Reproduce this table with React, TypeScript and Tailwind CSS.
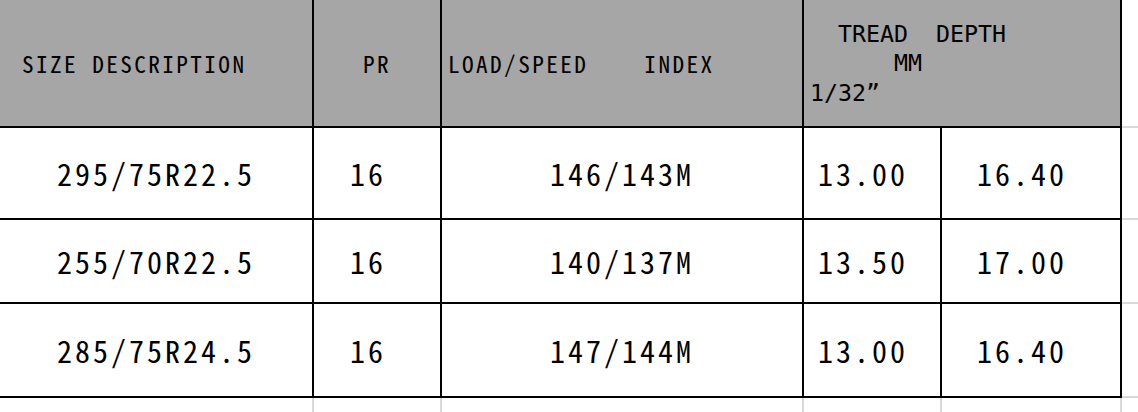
import React from "react";

const mono = { fontFamily: '"Noto Sans Mono CJK SC", "DejaVu Sans Mono", monospace' };
const dejavu = { fontFamily: '"DejaVu Sans Mono", "Liberation Mono", monospace' };

const rows = [
  { h: "h-[92px]", size: "295/75R22.5", pr: "16 ", li: "146/143M", mm: "13.00 ", in32: "16.40 " },
  { h: "h-[84px]", size: "255/70R22.5", pr: "16 ", li: "140/137M", mm: "13.50 ", in32: "17.00 " },
  { h: "h-[94px]", size: "285/75R24.5", pr: "16 ", li: "147/144M", mm: "13.00 ", in32: "16.40 " },
];

export default function App() {
  const cell = "flex items-center justify-center border-r-2 border-b-2 border-black text-[30px] tracking-[3px] leading-none text-black whitespace-pre";
  const head = "h-[128px] bg-[#a6a6a6] border-r-2 border-b-2 border-black text-[23.25px] text-black whitespace-pre";
  return (
    <div className="w-[1138px] h-[412px] bg-white overflow-hidden" style={mono}>
      <div className="grid grid-cols-[314px_128px_362px_138px_180px_16px]">
        {/* header */}
        <div className={`${head} tracking-[2.4px] flex items-center pl-[22px]`}>SIZE DESCRIPTION</div>
        <div className={`${head} tracking-[2.4px] flex items-center justify-center`}>PR</div>
        <div className={`${head} tracking-[2.4px] flex items-center pl-[6px]`}>{"LOAD/SPEED    INDEX"}</div>
        <div
          className={`${head} col-span-2 flex flex-col justify-center pl-[6px] leading-[29.5px]`}
          style={dejavu}
        >
          <div>{"  TREAD  DEPTH"}</div>
          <div>{"      MM"}</div>
          <div>{"1/32\u201d"}</div>
        </div>
        <div className="h-[128px] border-b-2 border-[#d9d9d9]" />

        {rows.map((r, i) => (
          <React.Fragment key={i}>
            <div className={`${r.h} ${cell}`}>{r.size}</div>
            <div className={`${r.h} ${cell}`}>{r.pr}</div>
            <div className={`${r.h} ${cell}`}>{r.li}</div>
            <div className={`${r.h} ${cell}`}>{r.mm}</div>
            <div className={`${r.h} ${cell}`}>{r.in32}</div>
            <div className={`${r.h} border-b-2 border-[#d9d9d9]`} />
          </React.Fragment>
        ))}

        {/* spreadsheet gridlines below */}
        <div className="h-[14px] border-r-2 border-[#d9d9d9]" />
        <div className="h-[14px] border-r-2 border-[#d9d9d9]" />
        <div className="h-[14px] border-r-2 border-[#d9d9d9]" />
        <div className="h-[14px] border-r-2 border-[#d9d9d9]" />
        <div className="h-[14px] border-r-2 border-[#d9d9d9]" />
        <div className="h-[14px]" />
      </div>
    </div>
  );
}
